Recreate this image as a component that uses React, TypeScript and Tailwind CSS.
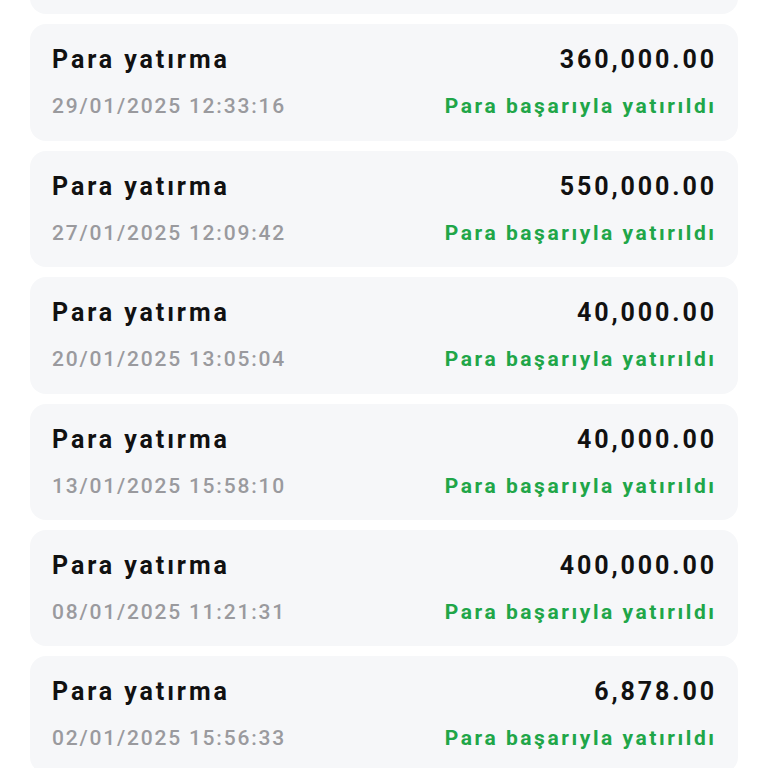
const rows = [
  { date: "30/01/2025 10:14:52", amount: "120,000.00" },
  { date: "29/01/2025 12:33:16", amount: "360,000.00" },
  { date: "27/01/2025 12:09:42", amount: "550,000.00" },
  { date: "20/01/2025 13:05:04", amount: "40,000.00" },
  { date: "13/01/2025 15:58:10", amount: "40,000.00" },
  { date: "08/01/2025 11:21:31", amount: "400,000.00" },
  { date: "02/01/2025 15:56:33", amount: "6,878.00" },
]

const TxRow = ({ date, amount }: { date: string; amount: string }) => {
  return (
    <div className="h-[116.4px] rounded-2xl bg-[#f6f7f9] pl-[22px] pr-[24px] pt-[21px] pb-[20px] flex flex-col gap-[17px]">
      <div className="flex items-center justify-between h-[30px] text-[25px] leading-[30px] font-bold tracking-[2.9px] text-[#111111]">
        <span>Para yatırma</span>
        <span className="-mr-[2.9px]">{amount}</span>
      </div>
      <div className="flex items-center justify-between h-[28px] text-[21px] leading-[28px]">
        <span className="text-[#9a9a9e] font-medium tracking-[1.8px]">{date}</span>
        <span className="text-[#20a648] font-bold tracking-[2.55px] -mr-[2.55px]">Para başarıyla yatırıldı</span>
      </div>
    </div>
  )
}

export default function App() {
  return (
    <div className="w-[768px] h-[768px] overflow-hidden bg-white font-['Roboto',sans-serif]">
      <div className="-mt-[102px] px-[30px] flex flex-col gap-[10px]">
        {rows.map((r, i) => (
          <TxRow key={i} date={r.date} amount={r.amount} />
        ))}
      </div>
    </div>
  )
}
